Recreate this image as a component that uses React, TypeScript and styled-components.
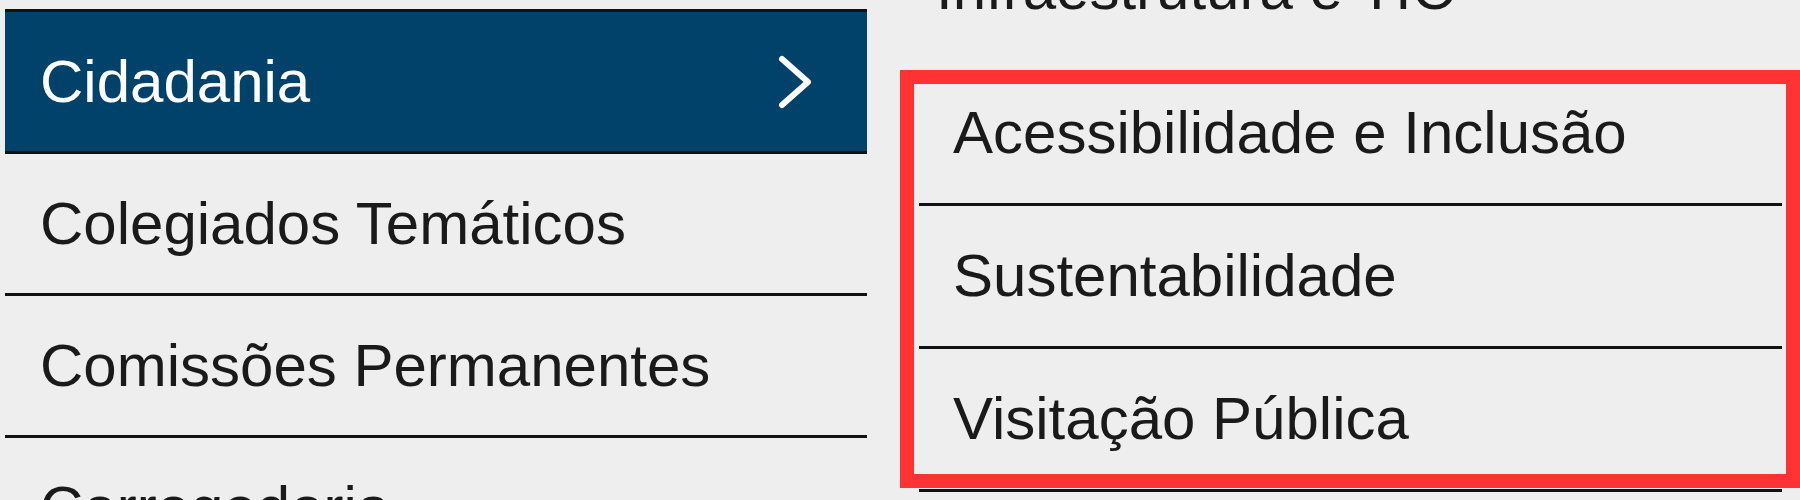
import React from "react";
import styled, { createGlobalStyle } from "styled-components";

const GlobalStyle = createGlobalStyle`
  html, body {
    margin: 0;
    padding: 0;
    height: 500px;
    overflow: hidden;
    background-color: #eeeeee;
  }
`;

const Page = styled.div`
  display: flex;
  align-items: flex-start;
  gap: 52px;
  padding-left: 5px;
  font-family: "Liberation Sans", Arial, sans-serif;
  font-size: 60px;
  color: #1a1a1a;
`;

const MainMenu = styled.ul`
  list-style: none;
  margin: 9px 0 0;
  padding: 0;
  width: 862px;
  flex-shrink: 0;
  border-top: 3px solid #111111;
`;

const MenuItem = styled.li<{ $active?: boolean }>`
  height: 139px;
  display: flex;
  align-items: center;
  justify-content: space-between;
  padding: 0 52px 0 35px;
  line-height: 1;
  border-bottom: 3px solid #111111;
  background-color: ${({ $active }) => ($active ? "#01426a" : "transparent")};
  color: ${({ $active }) => ($active ? "#ffffff" : "#1a1a1a")};
`;

const SubMenu = styled.div`
  position: relative;
  width: 863px;
  flex-shrink: 0;
`;

const SubHeading = styled.div`
  height: 63px;
  display: flex;
  align-items: flex-end;
  padding: 0 0 44px 17px;
  box-sizing: border-box;
  line-height: 60px;
  white-space: nowrap;
`;

const SubList = styled.ul`
  list-style: none;
  margin: 0;
  padding: 0;
`;

const SubItem = styled.li`
  height: 140px;
  display: flex;
  align-items: center;
  padding-left: 34px;
  line-height: 1;
  border-bottom: 3px solid #111111;
`;

const Highlight = styled.div`
  position: absolute;
  left: -19px;
  top: 70px;
  width: 900px;
  height: 418px;
  box-sizing: border-box;
  border: 14px solid #ff3333;
  pointer-events: none;
`;

const Chevron = () => (
  <svg width="40" height="60" viewBox="0 0 40 60">
    <polyline
      points="7,7 33,30 7,53"
      fill="none"
      stroke="#ffffff"
      strokeWidth="6"
      strokeLinecap="round"
      strokeLinejoin="round"
    />
  </svg>
);

const mainItems = [
  "Cidadania",
  "Colegiados Temáticos",
  "Comissões Permanentes",
  "Corregedoria",
];

const subItems = [
  "Acessibilidade e Inclusão",
  "Sustentabilidade",
  "Visitação Pública",
];

export default function App() {
  return (
    <>
      <GlobalStyle />
      <Page>
        <MainMenu>
          {mainItems.map((item, i) => (
            <MenuItem key={item} $active={i === 0}>
              <span>{item}</span>
              {i === 0 && <Chevron />}
            </MenuItem>
          ))}
        </MainMenu>
        <SubMenu>
          <SubHeading>Infraestrutura e TIC</SubHeading>
          <SubList>
            {subItems.map((item) => (
              <SubItem key={item}>{item}</SubItem>
            ))}
          </SubList>
          <Highlight />
        </SubMenu>
      </Page>
    </>
  );
}
